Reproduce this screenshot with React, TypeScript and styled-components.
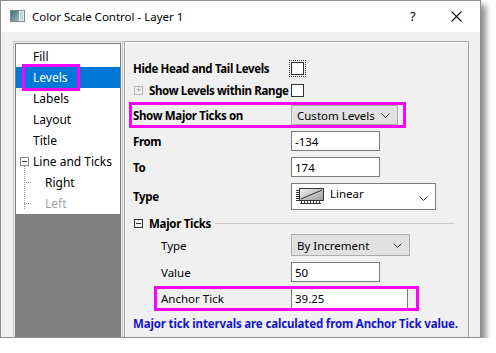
import styled, { createGlobalStyle } from 'styled-components';

const GlobalStyle = createGlobalStyle`
  body {
    margin: 0;
    background: #ffffff;
    font-family: "Noto Sans", "Open Sans", sans-serif;
    font-size: 11.5px;
    color: #000;
  }
`;

const treeItems = [
  { label: 'Fill' },
  { label: 'Levels', selected: true },
  { label: 'Labels' },
  { label: 'Layout' },
  { label: 'Title' },
  { label: 'Line and Ticks', toggle: true },
  { label: 'Right', child: true },
  { label: 'Left', child: true, disabled: true },
];

function Chevron() {
  return (
    <svg width="9" height="5" viewBox="0 0 9 5">
      <polyline points="0.5,0.5 4.5,4.5 8.5,0.5" fill="none" stroke="#333" strokeWidth="1" />
    </svg>
  );
}

function AppIcon() {
  return (
    <svg width="15" height="12" viewBox="0 0 15 12">
      <defs>
        <linearGradient id="ai" x1="0" x2="1" y1="0" y2="1">
          <stop offset="0" stopColor="#3f6f73" />
          <stop offset="1" stopColor="#9bb7b8" />
        </linearGradient>
      </defs>
      <rect x="0.5" y="0.5" width="14" height="11" fill="#e8ecec" stroke="#7b8c8d" />
      <rect x="1" y="1" width="8" height="10" fill="url(#ai)" />
      <rect x="10" y="2" width="3" height="8" fill="#c7d2d3" />
    </svg>
  );
}

function LinearIcon() {
  return (
    <svg width="32" height="21" viewBox="0 0 32 21">
      <defs>
        <linearGradient id="li" x1="0" x2="1" y1="0" y2="1">
          <stop offset="0" stopColor="#f4f4f4" />
          <stop offset="1" stopColor="#9a9a9a" />
        </linearGradient>
      </defs>
      <rect x="5.5" y="2.5" width="24" height="12" fill="url(#li)" stroke="#333" />
      <line x1="7" y1="13" x2="28" y2="4" stroke="#333" strokeWidth="1" />
      {[4, 6, 8, 10, 12, 14].map((y) => (
        <line key={y} x1="2" y1={y + 0.5} x2="5" y2={y + 0.5} stroke="#333" />
      ))}
      {[7, 10, 13, 16, 19, 22, 25].map((x) => (
        <line key={x} x1={x + 0.5} y1="15" x2={x + 0.5} y2="18" stroke="#333" />
      ))}
      <line x1="6" y1="17.5" x2="27" y2="17.5" stroke="#333" />
    </svg>
  );
}

export default function App() {
  return (
    <>
      <GlobalStyle />
      <Window>
        <TitleBar>
          <AppIcon />
          <TitleText>Color Scale Control - Layer 1</TitleText>
          <TitleButton>?</TitleButton>
          <CloseButton>
            <svg width="11" height="11" viewBox="0 0 11 11">
              <line x1="0.5" y1="0.5" x2="10.5" y2="10.5" stroke="#111" strokeWidth="1.1" />
              <line x1="10.5" y1="0.5" x2="0.5" y2="10.5" stroke="#111" strokeWidth="1.1" />
            </svg>
          </CloseButton>
        </TitleBar>
        <Body>
          <TreeFrame>
            <TreeInner>
              <TreeList>
                {treeItems.map((item) => (
                  <TreeItem
                    key={item.label}
                    $selected={item.selected}
                    $child={item.child}
                    $disabled={item.disabled}
                  >
                    {item.toggle && (
                      <TreeToggle>
                        <CollapseLine />
                      </TreeToggle>
                    )}
                    {item.child && <TreeBranch />}
                    <TreeLabel>{item.label}</TreeLabel>
                    {item.selected && <Mark />}
                  </TreeItem>
                ))}
                <TreeTrunk />
              </TreeList>
              <TreeFiller />
            </TreeInner>
          </TreeFrame>
          <Panel>
            <Row $h={22}>
              <Label $bold>Hide Head and Tail Levels</Label>
              <FocusRing>
                <CheckBox />
              </FocusRing>
            </Row>
            <Row $h={22}>
              <Label $bold>
                <ExpandBox>+</ExpandBox>
                Show Levels within Range
              </Label>
              <CheckBox />
            </Row>
            <Highlight $w={271} $offset={-1} $my={4}>
              <Row $h={20}>
                <Label $bold $w={158}>Show Major Ticks on</Label>
                <Combo $w={107} $h={20}>
                  <span>Custom Levels</span>
                  <Chevron />
                </Combo>
              </Row>
            </Highlight>
            <Row $h={24}>
              <Label $bold>From</Label>
              <TextBox $w={89}>-134</TextBox>
            </Row>
            <Row $h={28}>
              <Label $bold>To</Label>
              <TextBox $w={89}>174</TextBox>
            </Row>
            <Row $h={31}>
              <Label $bold>Type</Label>
              <TypeCombo>
                <LinearIcon />
                <TypeText>Linear</TypeText>
                <TypeChevron>
                  <Chevron />
                </TypeChevron>
              </TypeCombo>
            </Row>
            <GroupRow>
              <CollapseBox>
                <CollapseLine />
              </CollapseBox>
              <GroupTitle>Major Ticks</GroupTitle>
              <GroupRule />
            </GroupRow>
            <Row $h={22}>
              <Label $indent>Type</Label>
              <Combo $w={119} $h={22}>
                <span>By Increment</span>
                <Chevron />
              </Combo>
            </Row>
            <Row $h={32}>
              <Label $indent>Value</Label>
              <TextBox $w={89}>50</TextBox>
            </Row>
            <Highlight $w={259} $offset={24} $my={1}>
              <Row $h={19}>
                <Label $w={134} $pad={4}>Anchor Tick</Label>
                <TextBox $w={117} $h={21}>39.25</TextBox>
              </Row>
            </Highlight>
            <Note>Major tick intervals are calculated from Anchor Tick value.</Note>
          </Panel>
        </Body>
      </Window>
    </>
  );
}

const Window = styled.div`
  width: 481px;
  height: 338px;
  box-sizing: border-box;
  border: 1px solid #8d8d8d;
  background: #f0f0f0;
  box-shadow: 5px 5px 6px rgba(0, 0, 0, 0.45);
  display: flex;
  flex-direction: column;
  overflow: hidden;
`;

const TitleBar = styled.div`
  height: 30px;
  flex: none;
  background: #ffffff;
  display: flex;
  align-items: center;
  padding-left: 9px;
  padding-bottom: 1px;
`;

const TitleText = styled.span`
  margin-left: 7px;
  font-size: 11.5px;
  color: #000;
  flex: 1;
`;

const TitleButton = styled.span`
  font-size: 13px;
  width: 14px;
  margin-right: 27px;
`;

const CloseButton = styled.span`
  display: flex;
  margin-right: 18px;
`;

const Body = styled.div`
  flex: 1;
  min-height: 0;
  display: flex;
  gap: 1px;
  padding: 9px 11px 0 12px;
`;

const TreeFrame = styled.div`
  width: 110px;
  flex: none;
  box-sizing: border-box;
  border: 1px solid #c9c9c9;
  border-bottom: none;
  padding: 1px 1px 0 1px;
  display: flex;
`;

const TreeInner = styled.div`
  flex: 1;
  border: 1px solid #7d7d7d;
  border-bottom: none;
  display: flex;
  flex-direction: column;
`;

const TreeList = styled.div`
  position: relative;
  background: #ffffff;
  padding-top: 2px;
`;

const TreeItem = styled.div<{ $selected?: boolean; $child?: boolean; $disabled?: boolean }>`
  position: relative;
  height: 21px;
  display: flex;
  align-items: center;
  white-space: nowrap;
  padding-left: ${({ $child }) => ($child ? '29px' : '17px')};
  background: ${({ $selected }) => ($selected ? '#0078d7' : 'transparent')};
  color: ${({ $selected, $disabled }) => ($selected ? '#fff' : $disabled ? '#a0a0a0' : '#000')};
`;

const TreeLabel = styled.span`
  font-size: 12px;
`;

const TreeToggle = styled.span`
  position: absolute;
  left: 4px;
  top: 6px;
  width: 7px;
  height: 7px;
  border: 1px solid #8a8a8a;
  background: #fff;
  display: flex;
  align-items: center;
  justify-content: center;
`;

const TreeBranch = styled.span`
  position: absolute;
  left: 8px;
  top: 10px;
  width: 7px;
  border-top: 1px dotted #a0a0a0;
`;

const TreeTrunk = styled.span`
  position: absolute;
  left: 8px;
  top: 122px;
  height: 43px;
  border-left: 1px dotted #a0a0a0;
`;

const Mark = styled.span`
  position: absolute;
  left: 6px;
  top: -3px;
  width: 52px;
  height: 21px;
  border: 3px solid #ff00ff;
`;

const TreeFiller = styled.div`
  flex: 1;
  background: #808080;
`;

const Panel = styled.div`
  flex: 1;
  box-sizing: border-box;
  border: 1px solid #a0a0a0;
  border-bottom: none;
  box-shadow: inset 1px 1px 0 #ffffff;
  padding: 15px 0 0 8px;
  display: flex;
  flex-direction: column;
`;

const Row = styled.div<{ $h: number }>`
  height: ${({ $h }) => $h}px;
  display: flex;
  align-items: center;
  flex: none;
`;

const Label = styled.span<{ $bold?: boolean; $indent?: boolean; $w?: number; $pad?: number }>`
  display: flex;
  align-items: center;
  box-sizing: border-box;
  width: ${({ $w, $indent }) => ($w ?? ($indent ? 130 : 158))}px;
  margin-left: ${({ $indent }) => ($indent ? '28px' : '0')};
  padding-left: ${({ $pad }) => $pad ?? 0}px;
  font-weight: ${({ $bold }) => ($bold ? 700 : 400)};
  letter-spacing: ${({ $bold }) => ($bold ? '-0.35px' : '0')};
  white-space: nowrap;
`;

const ExpandBox = styled.span`
  width: 7px;
  height: 7px;
  border: 1px solid #b4b4b4;
  color: #9a9a9a;
  font-size: 9px;
  font-weight: 400;
  line-height: 6px;
  text-align: center;
  margin: 0 6px 0 1px;
`;

const CheckBox = styled.span`
  display: block;
  width: 11px;
  height: 11px;
  border: 1px solid #333333;
  background: #ffffff;
`;

const FocusRing = styled.span`
  display: flex;
  padding: 1px;
  margin-left: -1px;
  outline: 1px dotted #333;
`;

const Highlight = styled.div<{ $w: number; $offset: number; $my: number }>`
  width: ${({ $w }) => $w}px;
  margin: ${({ $my, $offset }) => `${$my}px 0 ${$my}px ${$offset}px`};
  padding-left: ${({ $offset }) => ($offset < 0 ? -$offset : 0)}px;
  box-sizing: border-box;
  outline: 3px solid #ff00ff;
  flex: none;
`;

const Combo = styled.div<{ $w: number; $h: number }>`
  width: ${({ $w }) => $w}px;
  height: ${({ $h }) => $h}px;
  box-sizing: border-box;
  border: 1px solid #adadad;
  background: #e1e1e1;
  display: flex;
  align-items: center;
  justify-content: space-between;
  padding: 0 7px 0 5px;
`;

const TextBox = styled.div<{ $w: number; $h?: number }>`
  width: ${({ $w }) => $w}px;
  height: ${({ $h }) => $h ?? 20}px;
  box-sizing: border-box;
  border: 1px solid #7a7a7a;
  background: #ffffff;
  display: flex;
  align-items: center;
  padding-left: 3px;
`;

const TypeCombo = styled.div`
  width: 145px;
  height: 27px;
  box-sizing: border-box;
  border: 1px solid #7a7a7a;
  background: #ffffff;
  display: flex;
  align-items: flex-start;
  padding: 2px 7px 0 2px;
`;

const TypeText = styled.span`
  margin-left: 4px;
  flex: 1;
  line-height: 16px;
`;

const TypeChevron = styled.span`
  align-self: center;
  display: flex;
  margin-top: 1px;
`;

const GroupRow = styled.div`
  height: 22px;
  width: 322px;
  display: flex;
  align-items: center;
  flex: none;
`;

const CollapseBox = styled.span`
  width: 7px;
  height: 7px;
  border: 1px solid #333;
  margin-left: 1px;
  display: flex;
  align-items: center;
  justify-content: center;
`;

const CollapseLine = styled.span`
  width: 5px;
  border-top: 1px solid #333;
`;

const GroupTitle = styled.span`
  font-weight: 700;
  letter-spacing: -0.3px;
  margin-left: 6px;
`;

const GroupRule = styled.span`
  flex: 1;
  margin-left: 4px;
  border-top: 1px solid #c8c8c8;
`;

const Note = styled.div`
  height: 28px;
  display: flex;
  align-items: center;
  font-weight: 700;
  letter-spacing: -0.15px;
  color: #1515c8;
  white-space: nowrap;
`;
